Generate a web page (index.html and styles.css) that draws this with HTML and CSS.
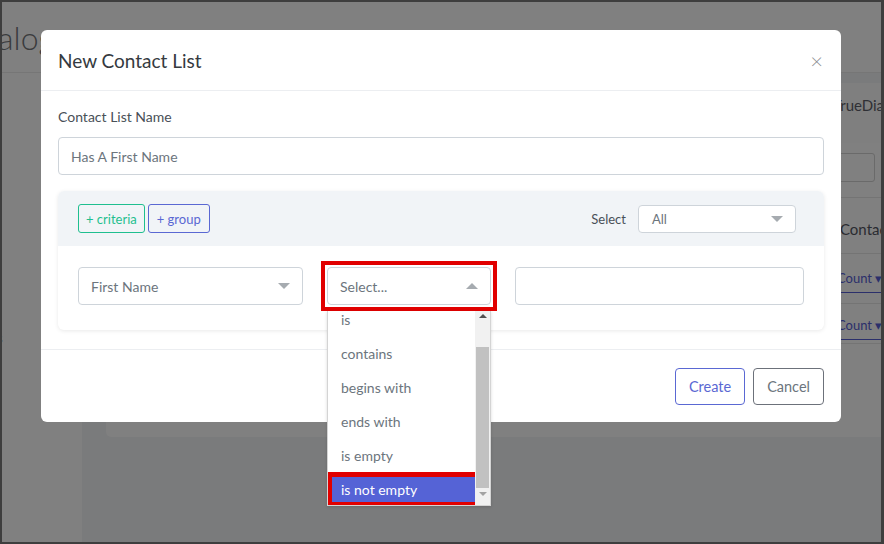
FILE: index.html
```html
<!DOCTYPE html>
<html lang="en">
<head>
<meta charset="UTF-8" />
<title>New Contact List</title>
<link rel="stylesheet" href="styles.css">
</head>
<body>

<div class="screen">
  <div class="topbar">
    <h1 class="app-title">Dialog</h1>
  </div>
  <div class="layout">
    <div class="sidebar">
      <div class="side-item">Lists</div>
    </div>
    <div class="main">
      <div class="page-card">
        <div class="page-spacer"></div>
        <div class="page-col">
          <div class="pc-title">TrueDialer</div>
          <div class="pc-search"></div>
          <div class="pc-head">Contacts</div>
          <div class="pc-row"><span class="pc-count">Count &#9662;</span></div>
          <div class="pc-row"><span class="pc-count">Count &#9662;</span></div>
        </div>
      </div>
    </div>
  </div>

  <!-- Modal -->
  <div class="modal">
    <div class="modal-header">
      <h2 class="modal-title">New Contact List</h2>
      <span class="modal-close">&times;</span>
    </div>
    <div class="modal-body">
      <label class="field-label">Contact List Name</label>
      <div class="text-input">Has A First Name</div>

      <div class="criteria-card">
        <div class="criteria-top">
          <button class="btn-sm btn-criteria">+ criteria</button>
          <button class="btn-sm btn-group">+ group</button>
          <span class="select-label">Select</span>
          <div class="select select-all">All<span class="caret"></span></div>
        </div>
        <div class="criteria-row">
          <div class="select select-field">First Name<span class="caret"></span></div>
          <div class="mark">
            <div class="select select-op">Select...<span class="caret caret-up"></span></div>
          </div>
          <div class="text-input value-input"></div>
        </div>
      </div>
    </div>
    <div class="modal-footer">
      <button class="btn btn-create">Create</button>
      <button class="btn btn-cancel">Cancel</button>
    </div>
  </div>

  <!-- Liste deroulante ouverte -->
  <div class="listbox">
    <div class="options">
      <div class="opt">is</div>
      <div class="opt">contains</div>
      <div class="opt">begins with</div>
      <div class="opt">ends with</div>
      <div class="opt">is empty</div>
      <div class="opt active">is not empty</div>
    </div>
    <div class="scrollbar">
      <span class="arrow arrow-up"></span>
      <span class="thumb"></span>
      <span class="arrow arrow-down"></span>
    </div>
  </div>
</div>

</body>
</html>
```

FILE: styles.css
```css
body {
  margin: 0;
  background: #3e3e3e;
  font-family: Lato, "Noto Sans", sans-serif;
}
.screen {
  position: relative;
  margin: 2px 3px 2px 2px;
  height: 540px;
  overflow: hidden;
  background: #7a7b7c;
}
/* Fond de page (assombri) */
.topbar {
  height: 70px;
  background: #808080;
  border-bottom: 1px solid #767676;
  display: flex;
  align-items: center;
}
.app-title {
  margin: 0 0 0 -35px;
  font-size: 32px;
  font-weight: 300;
  color: #3a3b3d;
}
.layout {
  display: flex;
  height: 469px;
}
.sidebar {
  width: 80px;
  background: #808080;
}
.side-item {
  margin: 257px 0 0 -25px;
  font-size: 13px;
  color: #3a3b3d;
}
.main {
  flex: 1;
  padding: 10px 0 0 24px;
}
.page-card {
  height: 354px;
  background: #808080;
  border-radius: 5px 0 0 5px;
  display: flex;
}
.page-spacer {
  flex: 1;
}
.page-col {
  width: 48px;
  overflow: hidden;
  white-space: nowrap;
  font-size: 15px;
  color: #2f3035;
}
.pc-title {
  height: 60px;
  line-height: 45px;
  background: #7f7f7f;
}
.pc-search {
  height: 27px;
  width: 40px;
  margin-top: 10px;
  border: 1px solid #6a6a6a;
  border-radius: 3px;
  background: #808080;
}
.pc-head {
  margin-top: 15px;
  height: 57px;
  line-height: 45px;
  padding: 9px 0 0 7px;
  box-sizing: border-box;
  border-top: 1px solid #747474;
  border-bottom: 1px solid #747474;
  font-size: 15px;
  color: #2a2b30;
}
.pc-row {
  height: 50px;
  border-bottom: 1px solid #747474;
  padding-top: 16px;
  box-sizing: border-box;
}
.pc-row + .pc-row {
  height: 40px;
  padding-top: 13px;
}
.pc-count {
  display: block;
  font-size: 13px;
  color: #2b2f6b;
  padding: 0 0 6px 4px;
  border-bottom: 1px solid #2b2f6b;
}
/* La pop-up */
.modal {
  position: absolute;
  left: 39px;
  top: 28px;
  width: 800px;
  height: 392px;
  background: #fff;
  border-radius: 6px;
  display: flex;
  flex-direction: column;
}
.modal-header {
  height: 60px;
  padding: 0 17px;
  border-bottom: 1px solid #eceef1;
  display: flex;
  align-items: center;
  justify-content: space-between;
}
.modal-title {
  margin: 0;
  font-size: 19px;
  font-weight: 400;
  color: #353a40;
}
.modal-close {
  font-size: 22px;
  font-weight: 300;
  color: #8a8d91;
  margin-right: 1px;
}
.modal-body {
  padding: 16px 17px 19px;
  border-bottom: 1px solid #eceef1;
}
.field-label {
  display: block;
  font-size: 14px;
  line-height: 20px;
  color: #495057;
  margin-bottom: 10px;
}
.text-input {
  height: 38px;
  box-sizing: border-box;
  border: 1px solid #ced4da;
  border-radius: 4px;
  padding: 0 12px;
  display: flex;
  align-items: center;
  font-size: 14px;
  color: #6c757d;
}
/* Bloc des criteres */
.criteria-card {
  margin-top: 16px;
  border-radius: 6px;
  background: #fff;
  box-shadow: 0 1px 4px rgba(0,0,0,0.09);
  overflow: hidden;
}
.criteria-top {
  height: 55px;
  background: #f1f4f7;
  padding: 0 28px 0 20px;
  display: flex;
  align-items: center;
}
.btn-sm {
  height: 29px;
  padding: 0 7px;
  margin-right: 3px;
  border-radius: 3px;
  background: transparent;
  font-family: inherit;
  font-size: 13px;
}
.btn-criteria {
  border: 1px solid #1fbf8f;
  color: #1fbf8f;
}
.btn-group {
  border: 1px solid #5a68d3;
  color: #5a68d3;
  padding: 0 8px;
}
.select-label {
  margin-left: auto;
  margin-right: 12px;
  font-size: 13px;
  color: #495057;
}
.select {
  position: relative;
  box-sizing: border-box;
  border: 1px solid #ced4da;
  border-radius: 4px;
  background: #fff;
  padding: 0 12px;
  display: flex;
  align-items: center;
  font-size: 14px;
  color: #6c757d;
}
.select-all {
  width: 158px;
  height: 28px;
  font-size: 13px;
  padding-left: 13px;
}
.caret {
  margin-left: auto;
  width: 0;
  height: 0;
  border-left: 6px solid transparent;
  border-right: 6px solid transparent;
  border-top: 6px solid #a6abb0;
}
.caret-up {
  border-top: none;
  border-bottom: 6px solid #a6abb0;
}
.criteria-row {
  padding: 21px 20px 25px;
  display: flex;
  gap: 24px;
}
.select-field {
  width: 225px;
  height: 38px;
}
/* cadre rouge d'annotation */
.mark {
  margin: -6px;
  padding: 2px;
  border: 4px solid #e10000;
}
.select-op {
  width: 164px;
  height: 38px;
}
.value-input {
  flex: 1;
}
.modal-footer {
  flex: 1;
  padding: 0 17px;
  display: flex;
  align-items: center;
  justify-content: flex-end;
  gap: 8px;
}
.btn {
  height: 37px;
  padding: 0 13px;
  border-radius: 4px;
  background: #fff;
  font-family: inherit;
  font-size: 14.5px;
}
.btn-create {
  border: 1px solid #5a68d3;
  color: #5a68d3;
}
.btn-cancel {
  border: 1px solid #6c717a;
  color: #6c757d;
}
/* Liste deroulante */
.listbox {
  position: absolute;
  left: 325px;
  top: 309px;
  width: 164px;
  height: 195px;
  box-sizing: border-box;
  border: 1px solid #d4d4d4;
  border-top: none;
  background: #fff;
  box-shadow: 0 1px 3px rgba(0,0,0,0.15);
  display: flex;
}
.options {
  flex: 1;
  margin-top: -8px;
  overflow: hidden;
}
.opt {
  height: 34px;
  line-height: 34px;
  padding-left: 13px;
  font-size: 14px;
  color: #6c757d;
}
.opt.active {
  height: 25px;
  line-height: 25px;
  margin: 4px 0 0 4px;
  padding-left: 9px;
  background: #5563d6;
  color: #fff;
  outline: 5px solid #e10000;
}
.scrollbar {
  width: 15px;
  background: #f1f1f1;
  display: flex;
  flex-direction: column;
  align-items: center;
}
.arrow {
  width: 0;
  height: 0;
  border-left: 4px solid transparent;
  border-right: 4px solid transparent;
}
.arrow-up {
  margin-top: 3px;
  border-bottom: 4px solid #505050;
}
.arrow-down {
  margin-top: 4px;
  border-top: 4px solid #a3a3a3;
}
.thumb {
  width: 13px;
  height: 141px;
  margin-top: 29px;
  background: #c1c1c1;
}
```
